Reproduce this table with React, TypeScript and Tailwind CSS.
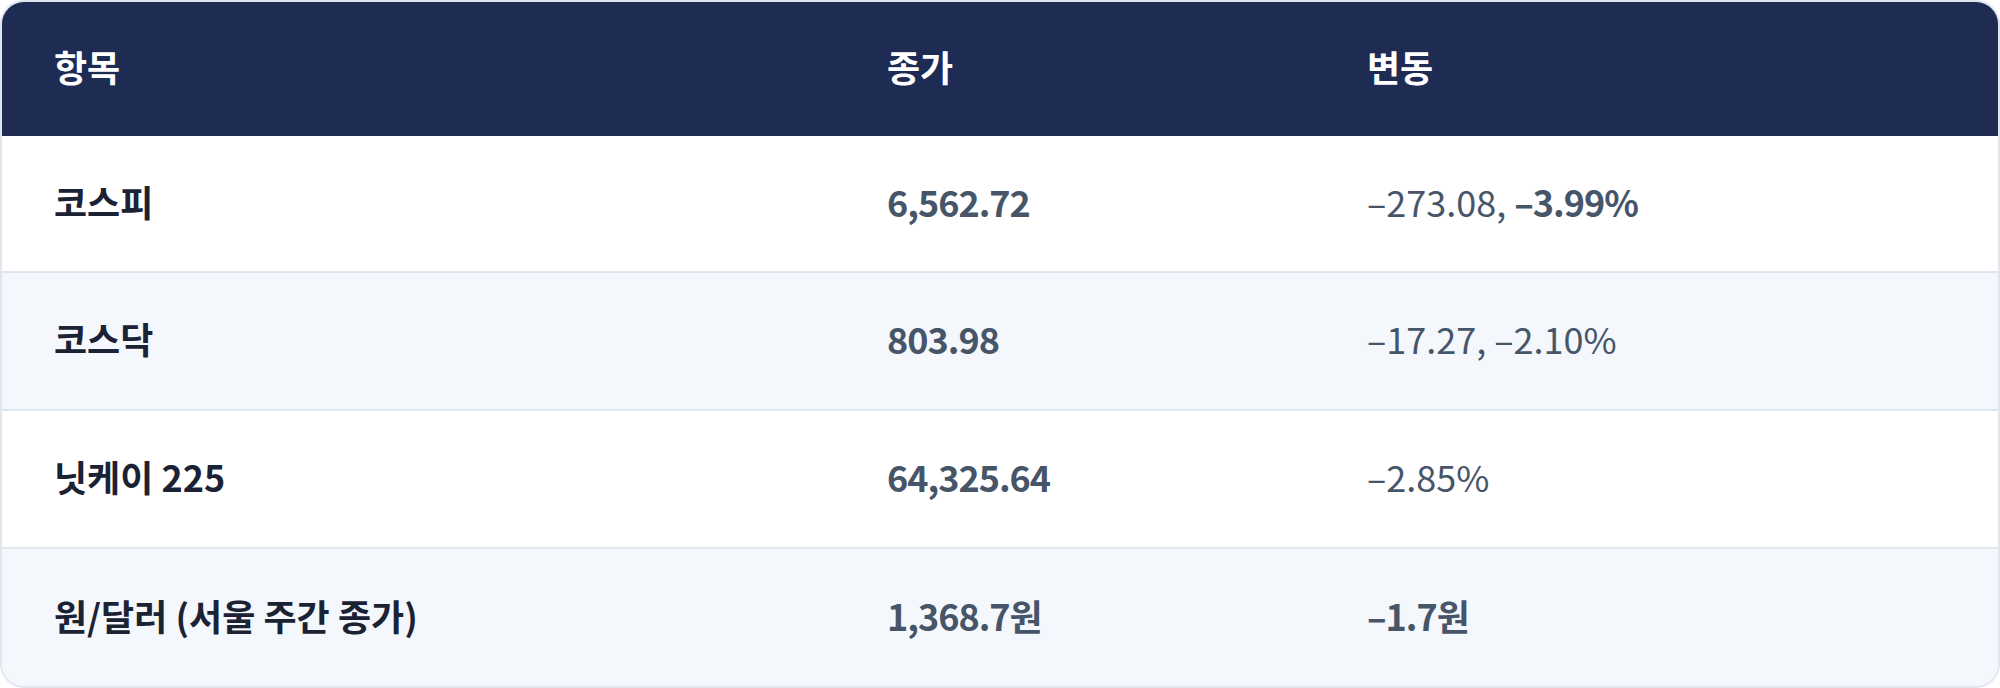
const rows = [
  {
    name: '코스피',
    close: '6,562.72',
    change: (
      <>
        –273.08, <span className="font-bold tracking-[-1px]">–3.99%</span>
      </>
    )
  },
  { name: '코스닥', close: '803.98', change: <>–17.27, –2.10%</> },
  { name: '닛케이 225', close: '64,325.64', change: <>–2.85%</> },
  {
    name: '원/달러 (서울 주간 종가)',
    close: '1,368.7원',
    change: <span className="font-bold tracking-[-1px]">–1.7원</span>
  }
];

export default function App() {
  return (
    <div
      className="w-[2000px] h-[688px] bg-white"
      style={{ fontFamily: '"Noto Sans CJK KR", "Noto Sans", sans-serif' }}
    >
      <div className="h-full border-2 border-[#e0e6f0] rounded-[24px] overflow-hidden">
        <table className="w-full table-fixed border-collapse text-[36px] leading-[54px]">
          <colgroup>
            <col className="w-[833px]" />
            <col className="w-[480px]" />
            <col />
          </colgroup>
          <thead>
            <tr className="bg-[#1e2b53] text-white h-[134px]">
              <th className="text-left font-bold pl-[52px] pb-[6px]">항목</th>
              <th className="text-left font-bold pl-[52px] pb-[6px]">종가</th>
              <th className="text-left font-bold pl-[52px] pb-[6px]">변동</th>
            </tr>
          </thead>
          <tbody>
            {rows.map((row, i) => (
              <tr
                key={row.name}
                className={
                  (i % 2 === 1 ? 'bg-[#f4f7fc] ' : 'bg-white ') +
                  (i > 0 ? 'border-t-2 border-[#e0e6f0] h-[138px]' : 'h-[136px]')
                }
              >
                <td className="pl-[52px] pb-[6px] font-bold text-[#1b2233]">
                  {row.name}
                </td>
                <td className="pl-[52px] pb-[6px] font-bold tracking-[-1px] text-[#475569]">
                  {row.close}
                </td>
                <td className="pl-[52px] pb-[6px] font-normal text-[#475569]">
                  {row.change}
                </td>
              </tr>
            ))}
          </tbody>
        </table>
      </div>
    </div>
  );
}
